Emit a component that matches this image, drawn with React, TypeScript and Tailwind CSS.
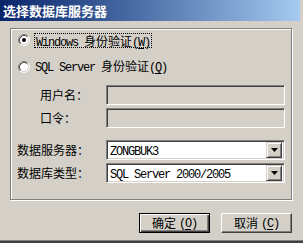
import React from 'react';

const CJK = { fontFamily: '"Noto Sans CJK SC", "Noto Sans", sans-serif' };

// latin text in the dialog is a 6px-wide monospace
function L({ children, u }: { children: React.ReactNode; u?: boolean }) {
  return (
    <span
      className={`font-['Liberation_Mono',monospace] text-[12px] tracking-[-1.2px] ${u ? 'underline underline-offset-2' : ''}`}
    >
      {children}
    </span>
  );
}

function Radio({ checked }: { checked?: boolean }) {
  return (
    <svg width="12" height="12" viewBox="0 0 12 12" className="shrink-0">
      <circle cx="6" cy="6" r="5" fill="#fff" />
      <path d="M2.11 9.89 A5.5 5.5 0 0 1 9.89 2.11" fill="none" stroke="#808080" />
      <path d="M9.89 2.11 A5.5 5.5 0 0 1 2.11 9.89" fill="none" stroke="#fff" />
      <path d="M2.82 9.18 A4.5 4.5 0 0 1 9.18 2.82" fill="none" stroke="#404040" />
      <path d="M9.18 2.82 A4.5 4.5 0 0 1 2.82 9.18" fill="none" stroke="#d4d0c8" />
      {checked && <circle cx="6" cy="6" r="2" fill="#000" />}
    </svg>
  );
}

const sunken =
  'border border-t-[#808080] border-l-[#808080] border-b-white border-r-white shadow-[inset_1px_1px_0_#404040,inset_-1px_-1px_0_#d4d0c8]';

function Combo({ value }: { value: string }) {
  return (
    <div className={`flex h-[20px] w-[179px] items-center bg-white p-[2px] ${sunken}`}>
      <div className="flex-1 pl-[1px] leading-[16px] text-black">
        <L>{value}</L>
      </div>
      <div className="flex h-[16px] w-[16px] items-center justify-center border border-t-[#d4d0c8] border-l-[#d4d0c8] border-b-[#404040] border-r-[#404040] bg-[#d4d0c8] shadow-[inset_1px_1px_0_#fff,inset_-1px_-1px_0_#808080]">
        <svg width="7" height="4" viewBox="0 0 7 4">
          <path d="M0 0h7L3.5 4z" fill="#000" />
        </svg>
      </div>
    </div>
  );
}

function Row({ label, pad, children }: { label: string; pad: string; children: React.ReactNode }) {
  return (
    <div className="flex h-[20px] items-center">
      <div className={`w-[95px] text-[12px] leading-[16px] ${pad}`} style={CJK}>
        {label}
      </div>
      {children}
    </div>
  );
}

export default function App() {
  return (
    <div className="relative flex h-[243px] w-[303px] flex-col overflow-hidden bg-[#d4d0c8] text-black" style={CJK}>
      {/* title bar */}
      <div className="flex h-[21px] w-[300px] shrink-0 items-center bg-gradient-to-r from-[#0a246a] to-[#a6caf0] pl-[3px] text-[13px] font-bold text-white">
        选择数据库服务器
      </div>

      {/* group box */}
      <div className="ml-[10px] mt-[7px] flex h-[172px] w-[282px] shrink-0 flex-col border border-[#808080] pt-[3px] shadow-[inset_1px_1px_0_#fff,1px_1px_0_#fff]">
        <div className="flex h-[16px] items-center pl-[7px]">
          <Radio checked />
          <span className="ml-[4px] block h-[15px] whitespace-pre border border-dotted border-black px-[1px] text-[12px] leading-[13px]">
            <L>Windows </L>身份验证<L>(</L><L u>W</L><L>)</L>
          </span>
        </div>
        <div className="mt-[11px] flex h-[16px] items-center pl-[7px]">
          <Radio />
          <span className="ml-[5px] block whitespace-pre text-[12px] leading-[16px]">
            <L>SQL Server </L>身份验证<L>(</L><L u>Q</L><L>)</L>
          </span>
        </div>

        <div className="mt-[10px]">
          <Row label="用户名：" pad="pl-[29px]">
            <div className={`h-[20px] w-[179px] bg-[#d4d0c8] ${sunken}`} />
          </Row>
        </div>
        <div className="mt-[3px]">
          <Row label="口令：" pad="pl-[29px]">
            <div className={`h-[20px] w-[179px] bg-[#d4d0c8] ${sunken}`} />
          </Row>
        </div>
        <div className="mt-[12px]">
          <Row label="数据服务器：" pad="pl-[6px]">
            <Combo value="ZONGBUK3" />
          </Row>
        </div>
        <div className="mt-[3px]">
          <Row label="数据库类型：" pad="pl-[6px]">
            <Combo value="SQL Server 2000/2005" />
          </Row>
        </div>
      </div>

      {/* buttons */}
      <div className="ml-[139px] mt-[13px] flex gap-[11px]">
        <button className="flex h-[20px] w-[71px] items-center justify-center whitespace-pre border border-black bg-[#d4d0c8] text-[12px] leading-[16px] shadow-[inset_1px_1px_0_#fff,inset_-1px_-1px_0_#404040,inset_-2px_-2px_0_#808080]">
          确定<span className="ml-[3px]"><L>(</L><L u>O</L><L>)</L></span>
        </button>
        <button className="flex h-[20px] w-[71px] items-center justify-center whitespace-pre border border-t-white border-l-white border-b-[#404040] border-r-[#404040] bg-[#d4d0c8] text-[12px] leading-[16px] shadow-[inset_-1px_-1px_0_#808080]">
          取消<span className="ml-[3px]"><L>(</L><L u>C</L><L>)</L></span>
        </button>
      </div>

      {/* window frame bottom */}
      <div className="mt-auto h-[3px] w-full shrink-0 border-t border-[#808080] bg-[#404040]" />
    </div>
  );
}
